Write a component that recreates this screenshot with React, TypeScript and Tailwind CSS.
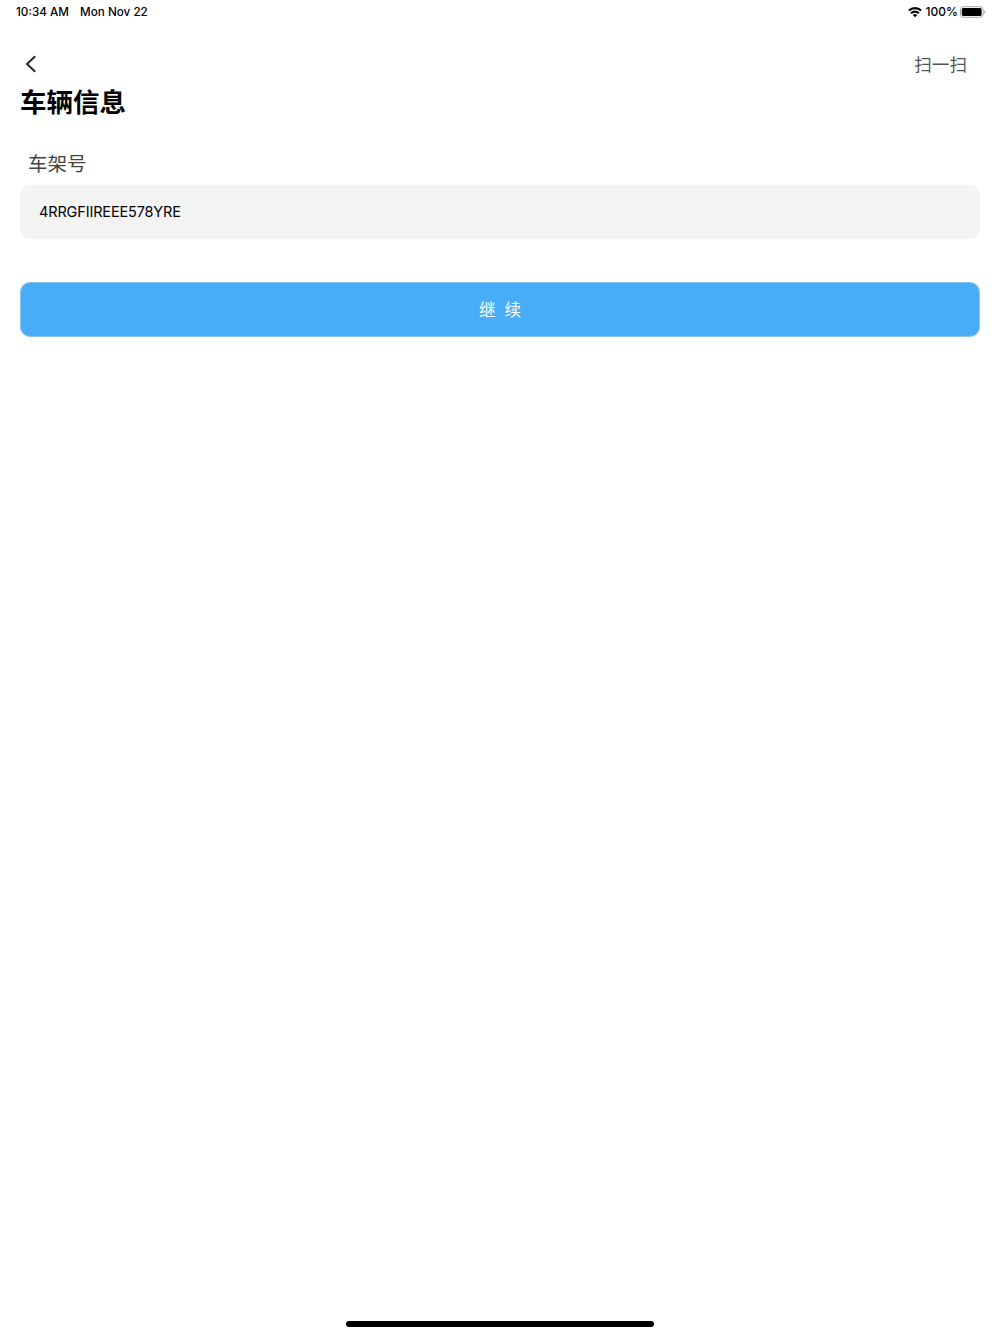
import { useState } from "react";

function WifiIcon() {
  return (
    <svg width="14" height="12" viewBox="0 0 14 12" fill="none" stroke="#000" strokeWidth="2.1">
      <path d="M0.9 4.6a8.7 8.7 0 0 1 12.2 0" />
      <path d="M3.1 7.2a5.5 5.5 0 0 1 7.8 0" />
      <path d="M7 11.3 4.7 9a3.3 3.3 0 0 1 4.6 0Z" fill="#000" stroke="none" />
    </svg>
  );
}

function BatteryIcon() {
  return (
    <svg width="26" height="12" viewBox="0 0 26 12" fill="none">
      <rect x="0.5" y="0.7" width="22.6" height="10.6" rx="3" stroke="#a6a6a6" />
      <rect x="1.8" y="2" width="19.8" height="8" rx="1.6" fill="#000" />
      <path d="M24.2 4.2v3.6c.7-.3 1.1-1 1.1-1.8s-.4-1.5-1.1-1.8Z" fill="#a6a6a6" />
    </svg>
  );
}

function StatusBar() {
  return (
    <div className="h-6 pl-4 pr-[14px] flex items-center justify-between text-xs font-medium text-black">
      <div className="pt-px flex gap-[11px] whitespace-nowrap text-[11.7px] leading-[17px]">
        <span>10:34 AM</span>
        <span>Mon Nov 22</span>
      </div>
      <div className="flex items-center">
        <WifiIcon />
        <span className="ml-[4px] mr-[2px]">100%</span>
        <BatteryIcon />
      </div>
    </div>
  );
}

export default function App() {
  const [vin, setVin] = useState("4RRGFIIREEE578YRE");

  return (
    <div className="h-screen flex flex-col bg-white overflow-hidden font-['Inter','Noto_Sans_CJK_SC',sans-serif]">
      <StatusBar />

      <header className="mt-6 h-8 pl-[25px] pr-[33px] flex items-center justify-between">
        <button aria-label="返回">
          <svg width="12" height="18" viewBox="0 0 12 18" fill="none" stroke="#222" strokeWidth="1.9">
            <path d="M10.2 1.2 2 9l8.2 7.8" />
          </svg>
        </button>
        <button className="pt-[2px] text-[17.6px] leading-8 text-[#555]">扫一扫</button>
      </header>

      <main className="px-5">
        <h1 className="mt-[2px] text-[26.5px] leading-10 font-bold text-black">车辆信息</h1>

        <label htmlFor="vin" className="block mt-[28px] ml-2 text-[19.5px] leading-7 text-[#444]">
          车架号
        </label>
        <input
          id="vin"
          value={vin}
          onChange={(e) => setVin(e.target.value)}
          className="block mt-[7px] w-full h-[54px] pb-[2px] px-[19px] rounded-[10px] bg-[#f4f4f4] text-[14.5px] tracking-[-0.15px] text-black outline-none"
        />

        <button className="mt-[43px] w-full h-[55px] pt-[2px] flex items-center justify-center gap-[9px] rounded-[10px] bg-[#47adf8] text-[16.6px] text-white border border-[#8fc4ea]">
          <span>继</span>
          <span>续</span>
        </button>
      </main>

      <div className="mt-auto mb-[7px] mx-auto w-[308px] h-[6px] rounded-full bg-black" />
    </div>
  );
}
